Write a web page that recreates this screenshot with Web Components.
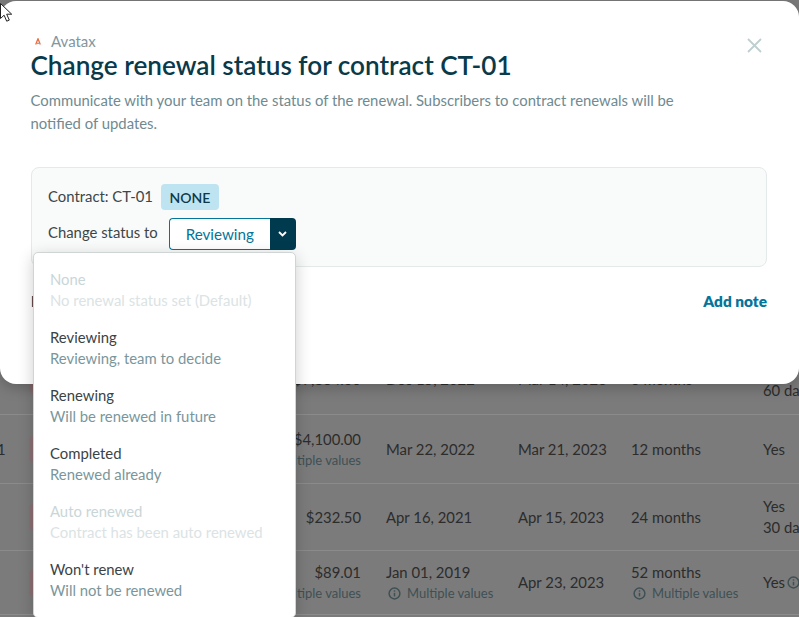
<!DOCTYPE html>
<html>
<head>
<meta charset="utf-8">
<title>Change renewal status</title>
<style>
  html, body { margin: 0; padding: 0; }
  body {
    width: 799px;
    height: 617px;
    position: relative;
    overflow: hidden;
    font-family: Lato, "Noto Sans", sans-serif;
  }
</style>
</head>
<body>
<contract-table></contract-table>
<renewal-modal></renewal-modal>
<status-menu></status-menu>
<mouse-cursor></mouse-cursor>

<script>
const infoIcon = `<svg width="13" height="13" viewBox="0 0 14 14" fill="none" stroke="#3f5054" stroke-width="1.6"><circle cx="7" cy="7" r="5.8"/><path d="M7 6.3v3.8"/><path d="M7 3.6v1.4"/></svg>`

class ContractRow extends HTMLElement {
  constructor() {
    super()
    this.attachShadow({ mode: "open" })
  }

  get styles() {
    return `
      :host {
        display: grid;
        grid-template-columns: 29px 18px 314px 157px 113px 132px 1fr;
        align-items: center;
        height: var(--h);
        box-sizing: border-box;
        border-bottom: 1px solid #8b8b8b;
        font-size: 14.86px;
        line-height: 21px;
        color: #2c2c2c;
        white-space: nowrap;
      }
      .num { margin-left: -3px; }
      .tag { width: 34px; height: 26px; border-radius: 4px; background: #8b7074; }
      .amount { text-align: right; }
      .sub { color: #3f5054; font-size: 13px; line-height: 20px; display: flex; align-items: center; gap: 6px; }
      .amount .sub { justify-content: flex-end; }
      .sub svg { margin-left: 2px; }
      .start { padding-left: 25px; }
      svg { display: block; flex: none; }
      .yes { display: flex; align-items: center; gap: 2px; }
    `
  }

  sub(show) {
    return show ? `<div class="sub">${show === 'icon' ? infoIcon : ''}Multiple values</div>` : ''
  }

  connectedCallback() {
    const a = (n) => this.getAttribute(n) ?? ''
    this.style.setProperty('--h', a('h') + 'px')
    this.shadowRoot.innerHTML = `
      <style>${this.styles}</style>
      <div class="num">${a('num')}</div>
      <div class="tag"></div>
      <div class="amount">${a('amount')}${this.sub(a('amountsub'))}</div>
      <div class="start">${a('start')}${this.sub(a('startsub'))}</div>
      <div>${a('end')}</div>
      <div>${a('term')}${this.sub(a('termsub'))}</div>
      <div>
        <div class="yes">Yes${a('yesicon') ? infoIcon : ''}</div>
        ${a('notice') ? `<div>${a('notice')}</div>` : ''}
      </div>
    `
  }
}
customElements.define("contract-row", ContractRow)

class ContractTable extends HTMLElement {
  constructor() {
    super()
    this.attachShadow({ mode: "open" })
  }

  connectedCallback() {
    this.shadowRoot.innerHTML = `
      <style>
        :host { display: block; height: 617px; background: #7b7b7b; padding-top: 345px; box-sizing: border-box; overflow: hidden; }
      </style>
      <contract-row h="70" amount="$7,864.00" start="Dec 15, 2022" end="Mar 14, 2023" term="3 months" notice="60 days"></contract-row>
      <contract-row h="69" num="1" amount="$4,100.00" amountsub="icon" start="Mar 22, 2022" end="Mar 21, 2023" term="12 months"></contract-row>
      <contract-row h="67" amount="$232.50" start="Apr 16, 2021" end="Apr 15, 2023" term="24 months" notice="30 days"></contract-row>
      <contract-row h="64" amount="$89.01" amountsub="icon" start="Jan 01, 2019" startsub="icon" end="Apr 23, 2023" term="52 months" termsub="icon" yesicon="1"></contract-row>
    `
  }
}
customElements.define("contract-table", ContractTable)

class RenewalModal extends HTMLElement {
  constructor() {
    super()
    this.attachShadow({ mode: "open" })
  }

  get styles() {
    return `
      :host {
        display: block;
        position: absolute;
        left: 0;
        top: 1px;
        width: 799px;
        height: 383px;
        box-sizing: border-box;
        padding: 30px 32px 0 31px;
        background: #fff;
        border-radius: 16px;
        box-shadow: 0 4px 14px rgba(0,0,0,.22);
      }
      .vendor { display: flex; align-items: center; gap: 10px; padding-left: 4px; font-size: 15px; line-height: 20px; color: #83979d; }
      .vendor svg { display: block; }
      h1 { margin: -1px 0 0 -.5px; font-size: 26.15px; line-height: 30px; font-weight: 600; color: #0a3a4a; }
      p { margin: 9px 0 0 -.5px; width: 670px; font-size: 14.86px; line-height: 23px; color: #6f8a91; }
      .close { position: absolute; left: 747px; top: 37px; width: 15px; height: 15px; }
      .panel {
        margin-top: 32px;
        height: 100px;
        box-sizing: border-box;
        padding: 16px 16px 0;
        background: #f9fafa;
        border: 1px solid #e4e9ea;
        border-radius: 8px;
        font-size: 14.86px;
        color: #3c4648;
      }
      .line { display: flex; align-items: center; }
      .line .label { padding-bottom: 2px; }
      .line.change .label { padding-bottom: 4px; }
      .badge {
        margin-left: 8px;
        height: 26px;
        padding: 0 8.5px;
        display: flex;
        align-items: center;
        border-radius: 4px;
        background: #bfe4f1;
        color: #0c3a4a;
        font-size: 14px;
        font-weight: 600;
      }
      .line.change { margin-top: 8px; }
      .select { margin-left: 11px; display: flex; height: 32px; box-sizing: border-box; }
      .value {
        width: 100px;
        border: 1px solid #04759a;
        border-right: 0;
        border-radius: 4px 0 0 4px;
        background: #fff;
        color: #04759a;
        font-size: 15.2px;
        display: flex;
        align-items: center;
        justify-content: center;
      }
      .arrow {
        width: 26px;
        border-radius: 0 4px 4px 0;
        background: #003a4f;
        display: flex;
        align-items: center;
        justify-content: center;
      }
      .notes { margin-top: 24px; display: flex; justify-content: space-between; font-size: 15.4px; line-height: 20px; font-weight: 800; }
      .notes .label { color: #0a3a4a; }
      .notes .add { color: #04759a; }
    `
  }

  connectedCallback() {
    this.shadowRoot.innerHTML = `
      <style>${this.styles}</style>
      <div class="vendor">
        <svg width="6" height="7" viewBox="0 0 6 7" fill="none"><path d="M.7 6.6 3 .8l2.3 5.8" stroke="#ee6a3c" stroke-width="1.3"/><path d="M2.2 5.4h1.6" stroke="#3aa6d8" stroke-width="1.2"/></svg>
        <span>Avatax</span>
      </div>
      <h1>Change renewal status for contract CT-01</h1>
      <p>Communicate with your team on the status of the renewal. Subscribers to contract renewals will be notified of updates.</p>
      <svg class="close" viewBox="0 0 15 15" fill="none" stroke="#bfcfd0" stroke-width="1.8"><path d="M1 1l13 13M14 1 1 14"/></svg>
      <div class="panel">
        <div class="line"><span class="label">Contract: CT-01</span><span class="badge">NONE</span></div>
        <div class="line change"><span class="label">Change status to</span>
          <div class="select">
            <div class="value">Reviewing</div>
            <div class="arrow"><svg width="9" height="6" viewBox="0 0 9 6" fill="none" stroke="#fff" stroke-width="1.8"><path d="M1 1l3.5 3.5L8 1"/></svg></div>
          </div>
        </div>
      </div>
      <div class="notes"><span class="label">Notes</span><span class="add">Add note</span></div>
    `
  }
}
customElements.define("renewal-modal", RenewalModal)

class StatusOption extends HTMLElement {
  constructor() {
    super()
    this.attachShadow({ mode: "open" })
  }

  connectedCallback() {
    this.shadowRoot.innerHTML = `
      <style>
        :host { display: block; height: 58px; padding: 7px 16px 0; box-sizing: border-box; font-size: 14.86px; line-height: 20px; white-space: nowrap; }
        .name { color: #3a4345; }
        .desc { margin-top: 1px; color: #7a969c; }
        :host([disabled]) .name { color: #c9d6d8; }
        :host([disabled]) .desc { color: #dbe3e4; }
      </style>
      <div class="name">${this.getAttribute('name')}</div>
      <div class="desc">${this.getAttribute('desc')}</div>
    `
  }
}
customElements.define("status-option", StatusOption)

class StatusMenu extends HTMLElement {
  constructor() {
    super()
    this.attachShadow({ mode: "open" })
  }

  connectedCallback() {
    this.shadowRoot.innerHTML = `
      <style>
        :host {
          display: block;
          position: absolute;
          left: 33px;
          top: 252px;
          width: 263px;
          height: 366px;
          box-sizing: border-box;
          padding-top: 9px;
          background: #fff;
          border: 1px solid #cfd4d5;
          border-radius: 5px;
          box-shadow: 0 4px 16px rgba(0,0,0,.2);
        }
      </style>
      <status-option disabled name="None" desc="No renewal status set (Default)"></status-option>
      <status-option name="Reviewing" desc="Reviewing, team to decide"></status-option>
      <status-option name="Renewing" desc="Will be renewed in future"></status-option>
      <status-option name="Completed" desc="Renewed already"></status-option>
      <status-option disabled name="Auto renewed" desc="Contract has been auto renewed"></status-option>
      <status-option name="Won't renew" desc="Will not be renewed"></status-option>
    `
  }
}
customElements.define("status-menu", StatusMenu)

class MouseCursor extends HTMLElement {
  constructor() {
    super()
    this.attachShadow({ mode: "open" })
  }

  connectedCallback() {
    this.shadowRoot.innerHTML = `
      <style>:host { display: block; position: absolute; left: 0; top: 3px; width: 13px; height: 21px; }</style>
      <svg width="13" height="21" viewBox="0 0 13 21"><path d="M.5.5v15l3.6-3.3 2.6 6 2.6-1.1-2.6-5.9h5z" fill="#fff" stroke="#222" stroke-width="1"/></svg>
    `
  }
}
customElements.define("mouse-cursor", MouseCursor)
</script>
</body>
</html>
